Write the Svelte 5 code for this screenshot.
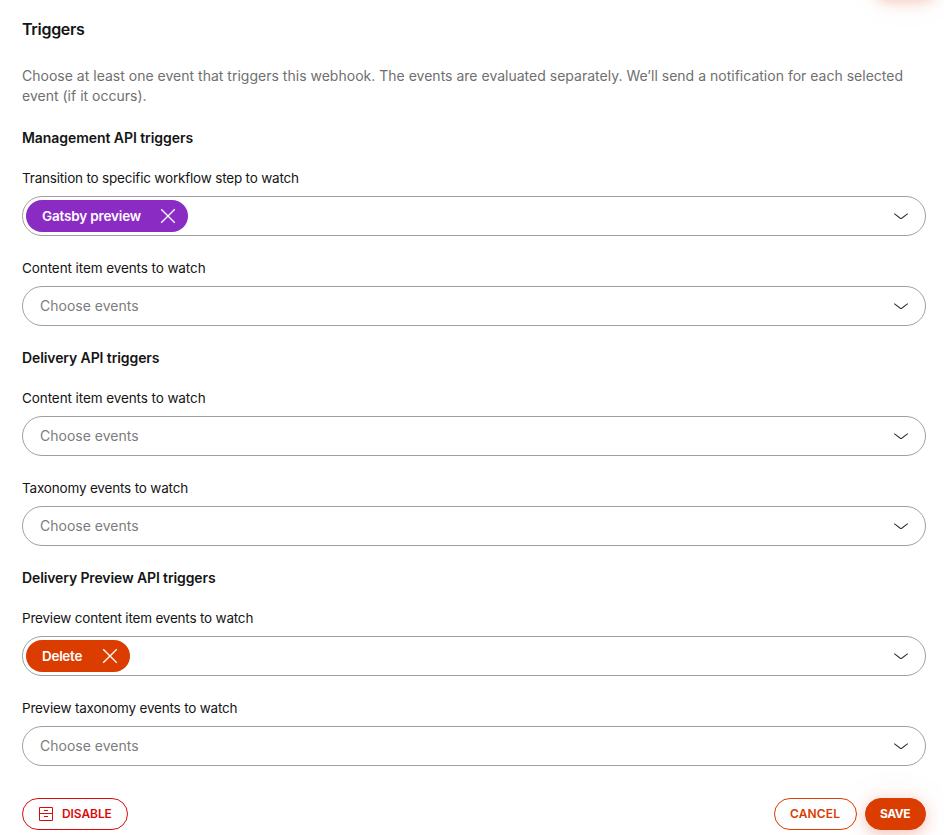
<script>
  const groups = [
    {
      title: 'Management API triggers',
      tracking: -0.06,
      fields: [
        { label: 'Transition to specific workflow step to watch', tracking: -0.19, tag: 'Gatsby preview', tone: 'purple' },
        { label: 'Content item events to watch', tracking: -0.09 }
      ]
    },
    {
      title: 'Delivery API triggers',
      tracking: -0.1,
      fields: [
        { label: 'Content item events to watch', tracking: -0.09 },
        { label: 'Taxonomy events to watch', tracking: -0.18 }
      ]
    },
    {
      title: 'Delivery Preview API triggers',
      tracking: -0.12,
      fields: [
        { label: 'Preview content item events to watch', tracking: -0.2, tag: 'Delete', tone: 'orange' },
        { label: 'Preview taxonomy events to watch', tracking: -0.19 }
      ]
    }
  ];
</script>

<main>
  <div class="glow"></div>
  <h1>Triggers</h1>
  <p>Choose at least one event that triggers this webhook. The events are evaluated separately. We’ll send a notification for each selected event (if it occurs).</p>

  {#each groups as group}
    <section>
      <h2 style="letter-spacing: {group.tracking}px">{group.title}</h2>
      {#each group.fields as field}
        <div class="field">
          <span class="label" style="letter-spacing: {field.tracking}px">{field.label}</span>
          <div class="select">
            {#if field.tag}
              <span class="tag {field.tone}">
                <span class="name">{field.tag}</span>
                <svg width="16" height="16" viewBox="0 0 16 16"><path d="M1.2 1.2 14.8 14.8M14.8 1.2 1.2 14.8" /></svg>
              </span>
            {:else}
              <span class="placeholder">Choose events</span>
            {/if}
            <svg class="chevron" width="16" height="16" viewBox="0 0 16 16"><path d="M1.2 5.6 7.3 10.2Q8 10.7 8.7 10.2L14.8 5.6" /></svg>
          </div>
        </div>
      {/each}
    </section>
  {/each}

  <footer>
    <button class="disable">
      <svg width="14" height="14" viewBox="0 0 14 14"><path d="M.5 .5h13v13H.5zM.5 6.5h13M5 3.5h4M5 9.5h4" /></svg>
      <span>DISABLE</span>
    </button>
    <button class="cancel"><span>CANCEL</span></button>
    <button class="save"><span>SAVE</span></button>
  </footer>
</main>

<style>
  :global(body) {
    margin: 0;
    background: #fff;
    overflow: hidden;
  }
  main {
    position: relative;
    box-sizing: border-box;
    height: 835px;
    overflow: hidden;
    padding: 19px 18px 0 22px;
    font-family: Inter, "Liberation Sans", sans-serif;
    font-size: 14px;
    line-height: 20px;
    color: #151515;
  }
  .glow {
    position: absolute;
    top: -28px;
    left: 875px;
    width: 61px;
    height: 28px;
    border-radius: 16px;
    box-shadow: 0 0 32px rgba(219, 60, 0, 0.1), 0 0 14px rgba(219, 60, 0, 0.28);
  }
  h1 {
    margin: 0;
    font-size: 16px;
    font-weight: 600;
    line-height: 20px;
    letter-spacing: -0.3px;
  }
  p {
    margin: 27px 0 22px;
    color: #6f6f6f;
    letter-spacing: 0.01px;
  }
  h2 {
    margin: 0 0 20px;
    font-size: 14px;
    font-weight: 600;
    line-height: 20px;
  }
  .field {
    display: flex;
    flex-direction: column;
    gap: 8px;
    margin-bottom: 22px;
  }
  .label {
    font-size: 13.5px;
    line-height: 20px;
  }
  .select {
    display: flex;
    align-items: center;
    box-sizing: border-box;
    height: 40px;
    padding: 0 16px 0 3px;
    border: 1px solid #a0a0a0;
    border-radius: 20px;
  }
  .placeholder {
    margin-left: 14px;
    color: #7c7c7c;
  }
  svg {
    flex: none;
    fill: none;
    stroke: currentColor;
  }
  .chevron {
    margin-left: auto;
    color: #333;
    stroke-width: 1.1;
  }
  .tag {
    display: flex;
    align-items: center;
    justify-content: space-between;
    box-sizing: border-box;
    height: 32px;
    padding: 0 12px 0 16px;
    border-radius: 16px;
    color: #fff;
    font-size: 13.5px;
    font-weight: 600;
    letter-spacing: -0.16px;
    white-space: nowrap;
  }
  .tag svg {
    stroke-width: 1.3;
  }
  .purple {
    width: 162px;
    background: #8a2bc4;
  }
  .orange {
    width: 104px;
    background: #db3c00;
    letter-spacing: -0.3px;
  }
  footer {
    display: flex;
    align-items: center;
    margin-top: 32px;
  }
  button {
    display: flex;
    align-items: center;
    box-sizing: border-box;
    height: 32px;
    padding: 0 0 0 15px;
    border: 1px solid currentColor;
    border-radius: 16px;
    background: #fff;
    font: 600 12px/16px Inter, "Liberation Sans", sans-serif;
  }
  .disable {
    gap: 9px;
    width: 106px;
    padding-left: 16px;
    margin-right: auto;
    color: #db0a0a;
    letter-spacing: -0.08px;
  }
  .cancel {
    width: 83px;
    margin-right: 8px;
    color: #db3c00;
    letter-spacing: 0.15px;
  }
  .save {
    width: 61px;
    padding-left: 14px;
    border-color: #db3c00;
    background: #db3c00;
    color: #fff;
    font-weight: 700;
    letter-spacing: -0.5px;
    box-shadow: 0 0 32px rgba(219, 60, 0, 0.1), 0 4px 14px rgba(219, 60, 0, 0.24);
  }
</style>
